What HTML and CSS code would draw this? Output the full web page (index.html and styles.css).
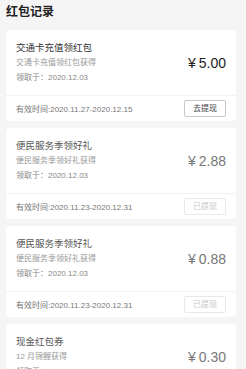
FILE: index.html
```html
<!DOCTYPE html>
<html lang="zh-CN">
<head>
<meta charset="utf-8">
<title>红包记录</title>
<link rel="stylesheet" href="styles.css">
</head>
<body>
<div class="page">
  <h1 class="heading">红包记录</h1>
  <div class="list">
    <div class="card">
      <div class="card-main">
        <div class="info">
          <div class="title">交通卡充值领红包</div>
          <div class="sub">交通卡充值领红包获得</div>
          <div class="date">领取于：2020.12.03</div>
        </div>
        <div class="amount"><span class="yen">¥</span>5.00</div>
      </div>
      <div class="card-foot">
        <div class="valid">有效时间:2020.11.27-2020.12.15</div>
        <button class="btn">去提现</button>
      </div>
    </div>
    <div class="card used">
      <div class="card-main">
        <div class="info">
          <div class="title">便民服务季领好礼</div>
          <div class="sub">便民服务季领好礼获得</div>
          <div class="date">领取于：2020.12.03</div>
        </div>
        <div class="amount"><span class="yen">¥</span>2.88</div>
      </div>
      <div class="card-foot">
        <div class="valid">有效时间:2020.11.23-2020.12.31</div>
        <button class="btn">已提现</button>
      </div>
    </div>
    <div class="card used">
      <div class="card-main">
        <div class="info">
          <div class="title">便民服务季领好礼</div>
          <div class="sub">便民服务季领好礼获得</div>
          <div class="date">领取于：2020.12.03</div>
        </div>
        <div class="amount"><span class="yen">¥</span>0.88</div>
      </div>
      <div class="card-foot">
        <div class="valid">有效时间:2020.11.23-2020.12.31</div>
        <button class="btn">已提现</button>
      </div>
    </div>
    <div class="card used">
      <div class="card-main">
        <div class="info">
          <div class="title">现金红包券</div>
          <div class="sub">12 月锦鲤获得</div>
          <div class="date">领取于：2020.12.03</div>
        </div>
        <div class="amount"><span class="yen">¥</span>0.30</div>
      </div>
      <div class="card-foot">
        <div class="valid">有效时间:2020.12.01-2020.12.31</div>
        <button class="btn">已提现</button>
      </div>
    </div>
  </div>
</div>
</body>
</html>
```

FILE: styles.css
```css
html, body {
  margin: 0;
  padding: 0;
}
body {
  background: #f5f5f5;
  font-family: "Liberation Sans", "Noto Sans CJK SC", sans-serif;
  color: #333;
  overflow: hidden;
}
.page {
  width: 246px;
}
.heading {
  margin: 0;
  padding: 4px 6px 0;
  font-size: 12px;
  line-height: 16px;
  font-weight: bold;
  color: #222;
}
.list {
  padding: 10px 10px 0 6px;
  display: flex;
  flex-direction: column;
  gap: 7px;
}
.card {
  background: #fff;
  border-radius: 4px;
}
.card-main {
  display: flex;
  align-items: center;
  justify-content: space-between;
  padding: 10px 10px 10px 10px;
  border-bottom: 1px solid #f2f2f2;
}
.info {
  display: flex;
  flex-direction: column;
}
.title {
  font-size: 9.5px;
  line-height: 15px;
  color: #333;
}
.sub {
  font-size: 8px;
  line-height: 15px;
  color: #999;
}
.date {
  font-size: 8px;
  line-height: 15px;
  color: #888;
}
.amount {
  font-size: 14px;
  line-height: 16px;
  color: #222;
}
.yen {
  margin-right: 3px;
}
.card-foot {
  display: flex;
  align-items: center;
  justify-content: space-between;
  height: 25px;
  padding: 0 10px;
}
.valid {
  font-size: 8px;
  color: #777;
}
.btn {
  width: 42px;
  height: 17px;
  padding: 0;
  margin: 0;
  background: #fff;
  border: 1px solid #c8c8c8;
  border-radius: 2px;
  font-family: "Liberation Sans", "Noto Sans CJK SC", sans-serif;
  font-size: 8px;
  color: #444;
  line-height: 15px;
}
.used .title {
  color: #555;
}
.used .amount {
  color: #777;
}
.used .btn {
  border-color: #e8e8e8;
  color: #c8c8c8;
}
```
